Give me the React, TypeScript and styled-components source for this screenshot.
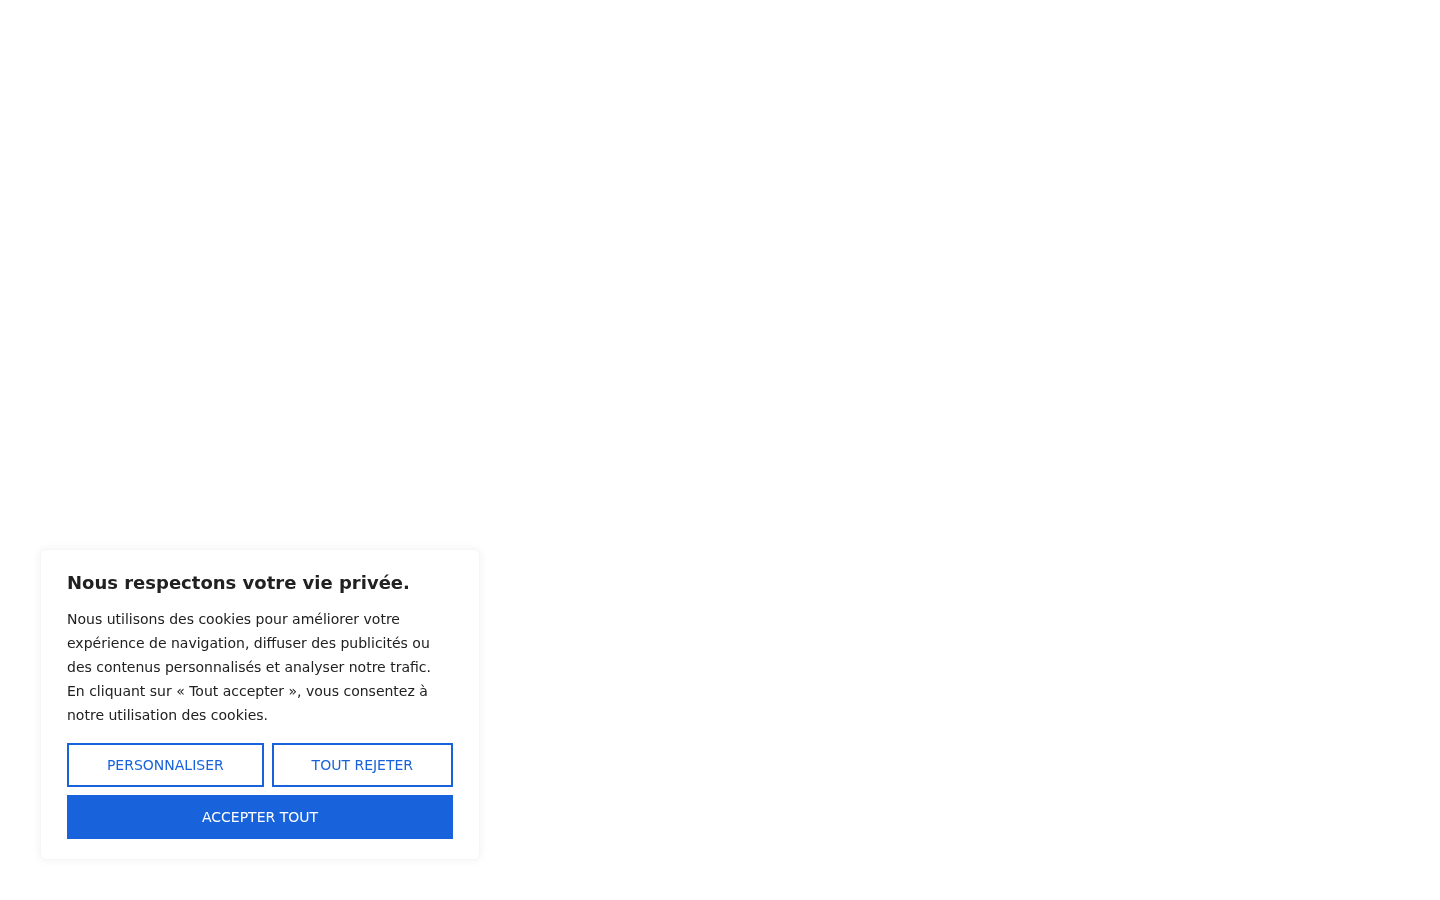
import React from 'react';
import styled, { createGlobalStyle } from 'styled-components';

const GlobalStyle = createGlobalStyle`
  html, body {
    margin: 0;
    padding: 0;
    background: #ffffff;
    font-family: 'DejaVu Sans', sans-serif;
  }
`;

const Page = styled.div`
  min-height: 4232px;
  background: #ffffff;
`;

const Banner = styled.div`
  position: fixed;
  left: 40px;
  bottom: 40px;
  width: 440px;
  box-sizing: border-box;
  padding: 22px 26px 20px;
  background: #ffffff;
  border: 1px solid #f6f6f6;
  border-radius: 6px;
  box-shadow: 0 0 10px rgba(0, 0, 0, 0.06);
  color: #212121;
`;

const Title = styled.h2`
  margin: 0 0 13px;
  font-size: 18px;
  font-weight: 700;
  line-height: 22px;
  color: #212121;
`;

const Text = styled.p`
  margin: 0 0 16px;
  font-size: 14px;
  line-height: 24px;
  color: #212121;
`;

const Row = styled.div`
  display: flex;
  gap: 8px;
  margin-bottom: 8px;
`;

const Button = styled.button<{ $primary?: boolean }>`
  flex: 1 1 auto;
  height: 44px;
  padding: 0 8px;
  box-sizing: border-box;
  white-space: nowrap;
  font-family: 'DejaVu Sans', sans-serif;
  font-size: 14px;
  text-transform: uppercase;
  cursor: pointer;
  border: 2px solid #1863dc;
  border-radius: 0;
  background: ${p => (p.$primary ? '#1863dc' : '#ffffff')};
  color: ${p => (p.$primary ? '#ffffff' : '#1863dc')};
`;

const Wide = styled(Button)`
  width: 100%;
  display: block;
`;

export default function App() {
  return (
    <>
      <GlobalStyle />
      <Page />
      <Banner>
        <Title>Nous respectons votre vie privée.</Title>
        <Text>
          Nous utilisons des cookies pour améliorer votre expérience de navigation, diffuser des
          publicités ou des contenus personnalisés et analyser notre trafic. En cliquant sur « Tout
          accepter », vous consentez à notre utilisation des cookies.
        </Text>
        <Row>
          <Button>Personnaliser</Button>
          <Button>Tout rejeter</Button>
        </Row>
        <Wide $primary>Accepter tout</Wide>
      </Banner>
    </>
  );
}
